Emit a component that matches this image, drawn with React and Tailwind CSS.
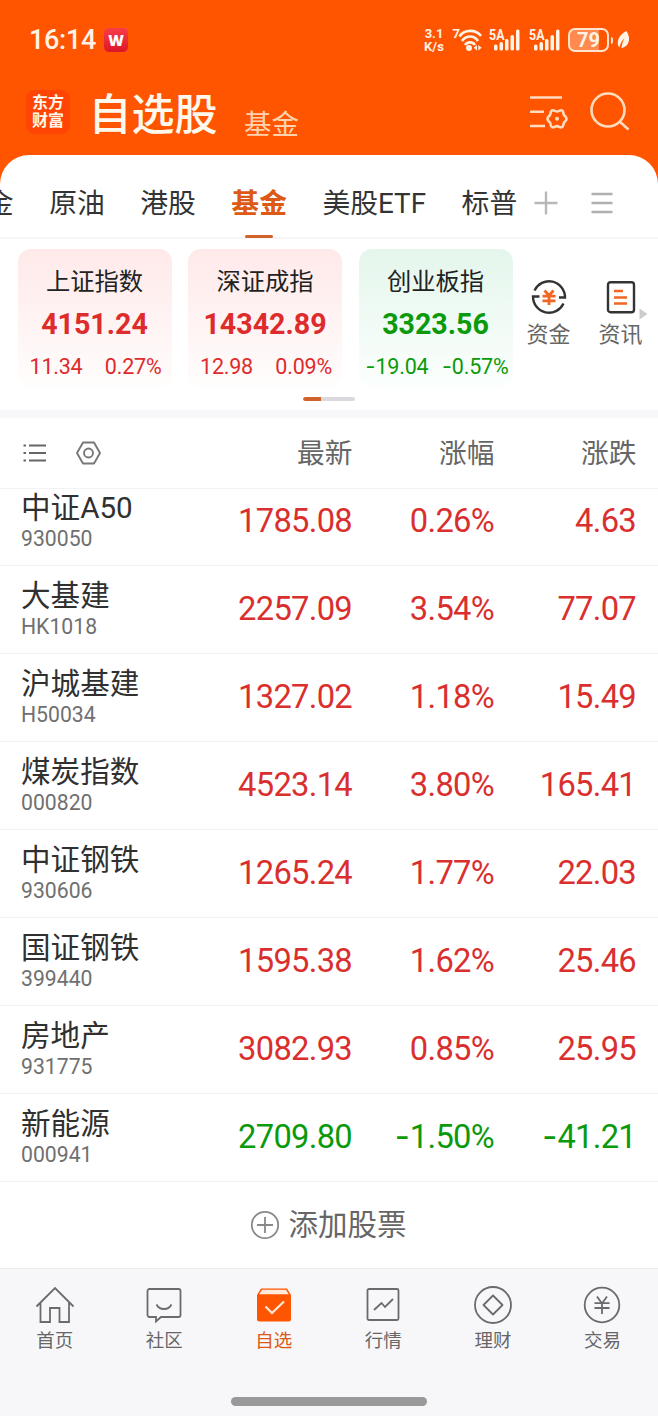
import clsx from "clsx";

const tabs = ["金", "原油", "港股", "基金", "美股ETF", "标普"];

const indices = [
  { name: "上证指数", value: "4151.24", change: "11.34", percent: "0.27%" },
  { name: "深证成指", value: "14342.89", change: "12.98", percent: "0.09%" },
  { name: "创业板指", value: "3323.56", change: "-19.04", percent: "-0.57%" },
];

const stocks = [
  { name: "中证A50", code: "930050", price: "1785.08", percent: "0.26%", change: "4.63" },
  { name: "大基建", code: "HK1018", price: "2257.09", percent: "3.54%", change: "77.07" },
  { name: "沪城基建", code: "H50034", price: "1327.02", percent: "1.18%", change: "15.49" },
  { name: "煤炭指数", code: "000820", price: "4523.14", percent: "3.80%", change: "165.41" },
  { name: "中证钢铁", code: "930606", price: "1265.24", percent: "1.77%", change: "22.03" },
  { name: "国证钢铁", code: "399440", price: "1595.38", percent: "1.62%", change: "25.46" },
  { name: "房地产", code: "931775", price: "3082.93", percent: "0.85%", change: "25.95" },
  { name: "新能源", code: "000941", price: "2709.80", percent: "-1.50%", change: "-41.21" },
];

// The minus sign is set in Inter, Roboto's hyphen is too short next to digits
function Num({ children }) {
  if (!children.startsWith("-")) return children;
  return (
    <>
      <span className="font-['Inter'] leading-[0] tracking-normal">-</span>
      {children.slice(1)}
    </>
  );
}

function Signal() {
  return (
    <svg width="33" height="24" viewBox="0 0 33 24" fill="#fff3e6">
      <text x="0" y="11.5" fontSize="14" fontWeight="700" fontFamily="Roboto, sans-serif" textLength="15.5" lengthAdjust="spacingAndGlyphs">
        5A
      </text>
      <rect x="5" y="16.5" width="3.5" height="6" rx="1.5" />
      <rect x="10.5" y="14" width="3.5" height="8.5" rx="1.5" />
      <rect x="16" y="11" width="3.5" height="11.5" rx="1.5" />
      <rect x="21.5" y="7" width="3.5" height="15.5" rx="1.5" />
      <rect x="27" y="1.5" width="3.5" height="21" rx="1.5" />
    </svg>
  );
}

function StatusBar() {
  return (
    <div className="flex h-20 items-center pl-[29px] pr-[28px] text-[#fff3e6]">
      <span className="text-[27px] leading-none font-medium tracking-[-0.3px]">16:14</span>
      <span className="ml-[8px] flex size-6 items-center justify-center rounded-[5px] bg-linear-to-b from-[#f83c48] to-[#dd1426] font-['Open_Sans'] text-[15px] leading-none font-extrabold text-white">
        W
      </span>
      <div className="ml-auto flex items-center">
        <div className="flex w-[24px] flex-col items-center text-[13px] leading-[13px] font-bold">
          <span>3.1</span>
          <span>K/s</span>
        </div>
        <svg className="ml-[6px]" width="31" height="26" viewBox="-1 0 31 26" fill="none" stroke="#fff3e6" strokeWidth="2.7">
          <text x="-0.5" y="11" fontSize="13" fontWeight="700" fontFamily="Roboto, sans-serif" fill="#fff3e6" stroke="none">
            7
          </text>
          <path d="M6.5 9.5C11 2 23 2 28 9" />
          <path d="M9 14c4-6 12-6 16 0" />
          <path d="M12 18c2.500-3.500 7.500-3.500 10 0" />
          <circle cx="16" cy="21" r="3" fill="#fff3e6" stroke="none" />
          <path d="M24 18v5.500l-3.300-2.800zM25.300 18v5.500l3.300-2.800z" fill="#fff3e6" stroke="none" />
        </svg>
        <div className="ml-[6px]">
          <Signal />
        </div>
        <div className="ml-[7px]">
          <Signal />
        </div>
        <div className="ml-[6px] flex h-[24px] w-[41px] items-center rounded-[7px] border-2 border-[#ffe4cf] bg-linear-to-r from-[#ff8a50] from-79% to-transparent to-79% pl-[7px] text-[20px] leading-none font-bold">
          79
        </div>
        <div className="ml-[2px] h-[7px] w-[2px] rounded-r bg-[#ffe4cf]" />
        <svg className="ml-[4px]" width="13" height="20" viewBox="0 0 13 20" fill="#fff3e6">
          <path d="M9.500 1C4 4 .5 8 .8 13.500c.1 1.800.7 3 1.600 4C3.300 13.500 5 10.500 7.600 8 6 11 5 14 4.300 18c6.500-.5 10.700-8 5.200-17z" />
        </svg>
      </div>
    </div>
  );
}

function TitleBar() {
  return (
    <div className="flex h-[75px] items-start pl-[26px] pr-[28px] text-[#fff8ec]">
      <div className="mt-[10px] flex size-[44px] flex-col items-center justify-center rounded-[9px] bg-[#ff4505] text-[16px] leading-[18px] font-bold">
        <span>东方</span>
        <span>财富</span>
      </div>
      <h1 className="ml-[18.5px] mt-[14px] text-[43px] leading-[42px] font-medium">自选股</h1>
      <span className="ml-[26.5px] mt-[31px] text-[27.5px] leading-[27px] text-[#ffd3ae]">基金</span>
      <svg className="ml-auto mt-[15px]" width="40" height="36" viewBox="0 0 40 36" fill="none" stroke="#ffdcc0" strokeWidth="2.6">
        <path d="M1 2.500h32M1 16.700h14M1 31h15" />
        <path
          d="M23 15.500c2-1 3 1 5 1s3-2 5-1 1 3.500 2.200 4.800 2.300 1.500 2.300 3.500-1.200 2.200-2.300 3.500-.2 3.800-2.200 4.800-3-1-5-1-3 2-5 1-1-3.500-2.200-4.800-2.300-1.500-2.300-3.500 1.200-2.200 2.300-3.500.2-3.800 2.200-4.800z"
          strokeLinejoin="round"
        />
        <circle cx="28" cy="23.800" r="2" fill="#ffdcc0" stroke="none" />
      </svg>
      <svg className="ml-[21px] mt-[12px]" width="40" height="40" viewBox="0 0 40 40" fill="none" stroke="#ffdcc0" strokeWidth="2.6">
        <circle cx="18" cy="18" r="16.500" />
        <path d="M29.500 29.500l9 8" />
      </svg>
    </div>
  );
}

function TabBar() {
  return (
    <div className="flex h-[84px] border-b-2 border-[#f5f5f7]">
      <div className="-ml-[14.2px] flex gap-[35.5px] text-[27.8px] leading-[98px] whitespace-nowrap text-[#333]">
        {tabs.map((tab) => (
          <div
            key={tab}
            className={clsx(
              "relative h-[83px]",
              tab === "基金" && "font-bold text-[#dd5a16]",
            )}
          >
            {tab}
            {tab === "基金" && (
              <span className="absolute bottom-0 left-1/2 h-[3px] w-7 -translate-x-1/2 rounded-full bg-[#d1622a]" />
            )}
          </div>
        ))}
      </div>
      <svg className="ml-[16.7px] mt-[36px]" width="24" height="24" viewBox="0 0 24 24" stroke="#b8b8b8" strokeWidth="2.4">
        <path d="M0.500 12h23M12 0.500v23" />
      </svg>
      <svg className="ml-[33px] mt-[36px]" width="22" height="24" viewBox="0 0 22 24" stroke="#b0b0b0" strokeWidth="2.4">
        <path d="M0.500 3h21M0.500 12h21M0.500 21h21" />
      </svg>
    </div>
  );
}

function IndexCard({ name, value, change, percent }) {
  const down = change.startsWith("-");
  return (
    <div
      className={clsx(
        "flex h-[139px] w-[154px] flex-col items-center rounded-[13px] bg-linear-to-b",
        down ? "from-[#e4f6ec] to-[#fcfffd] text-[#0b9a0b]" : "from-[#ffe9e9] to-[#fffdfd] text-[#de2b2b]",
      )}
    >
      <div className="mt-[21px] text-[24.3px] leading-[24px] text-[#222]">{name}</div>
      <div className="mt-[16px] text-[28.6px] leading-[28px] font-bold">{value}</div>
      <div
        className={clsx(
          "mt-[18px] flex w-full justify-between text-[21.5px] leading-[22px] tracking-[-0.2px]",
          down ? "pl-[7px] pr-[4px]" : "pl-[12px] pr-[10px]",
        )}
      >
        <span><Num>{change}</Num></span>
        <span><Num>{percent}</Num></span>
      </div>
    </div>
  );
}

function IndexPanel() {
  return (
    <div className="h-[171px]">
      <div className="flex pt-[10px] pl-[17.5px]">
        <div className="flex gap-[16.5px]">
          {indices.map((item) => (
            <IndexCard key={item.name} {...item} />
          ))}
        </div>
        <div className="ml-[14px] mt-[30px] flex flex-col items-center text-[22px] leading-[22px] text-[#666]">
          <svg width="36" height="36" viewBox="0 0 36 36" fill="none" stroke="#333" strokeWidth="2.4">
            <path d="M3.500 11.500A16 16 0 0 1 34 18.500h-6" />
            <path d="M32.500 24.500A16 16 0 0 1 2 17.500h6.500" />
            <path d="M13.500 11.500l4.500 5 4.500-5M11.500 17.200h13M11.500 21.800h13M18 16.500v9.500" stroke="#f26522" strokeWidth="2.8" />
          </svg>
          <span className="mt-[9px]">资金</span>
        </div>
        <div className="ml-[28px] mt-[30px] flex flex-col items-center text-[22px] leading-[22px] text-[#666]">
          <svg width="30" height="36" viewBox="0 0 30 36" fill="none" stroke="#333" strokeWidth="2.4">
            <rect x="2" y="3.200" width="26" height="30" rx="2.500" />
            <path d="M8 12h9M8 18.500h13M8 24.500h13" stroke="#f26522" strokeWidth="2.6" />
          </svg>
          <span className="mt-[9px]">资讯</span>
        </div>
        <svg className="-ml-[4px] mt-[59px]" width="9" height="12" viewBox="0 0 9 12" fill="#ccc">
          <path d="M0.500 0.500v11l8-5.500z" />
        </svg>
      </div>
      <div className="mx-auto mt-[9px] h-[4px] w-[52px] overflow-hidden rounded-full bg-[#d9d9de]">
        <div className="h-full w-[18px] rounded-l-full bg-[#d1622a]" />
      </div>
    </div>
  );
}

function ListHeader() {
  return (
    <div className="flex h-[71px] items-center border-b border-[#f2f2f2] pr-[21.5px] pl-[23px] text-[27.7px] leading-none text-[#666]">
      <svg width="24" height="20" viewBox="0 0 24 20" stroke="#666" strokeWidth="2.2">
        <path d="M0.500 2.500h2.500M6 2.500h17M0.500 10h2.500M6 10h17M0.500 17.500h2.500M6 17.500h17" />
      </svg>
      <svg className="ml-[29px]" width="26" height="24" viewBox="0 0 26 24" fill="none" stroke="#777" strokeWidth="1.9" strokeLinejoin="round">
        <path d="M7 1.500h11l6 10.500-6 10.500h-11l-6-10.500z" />
        <circle cx="12.500" cy="12" r="4.500" />
      </svg>
      <span className="ml-auto pt-[2px]">最新</span>
      <span className="w-[142px] pt-[2px] text-right">涨幅</span>
      <span className="w-[142px] pt-[2px] text-right">涨跌</span>
    </div>
  );
}

function StockRow({ name, code, price, percent, change }) {
  return (
    <div className="flex h-[88px] items-center border-b border-[#f2f2f2] pr-[22px] pb-[2px] pl-[21px]">
      <div className="flex-1">
        <div className="text-[29.6px] leading-[34px] text-[#303030]">{name}</div>
        <div className="mt-[3px] text-[21.2px] leading-[22px] text-[#707070]">{code}</div>
      </div>
      <div
        className={clsx(
          "flex pt-[2px] text-right text-[32.7px] leading-none tracking-[-0.7px]",
          change.startsWith("-") ? "text-[#0b9a0b]" : "text-[#d92f2f]",
        )}
      >
        <span>{price}</span>
        <span className="w-[142px]"><Num>{percent}</Num></span>
        <span className="w-[142px]"><Num>{change}</Num></span>
      </div>
    </div>
  );
}

const navItems = [
  {
    label: "首页",
    icon: (
      <path d="M1.500 20.500L20 2l18.500 18.500M5.500 17v19h9.500V22h9.500v14h9.500V17" />
    ),
  },
  {
    label: "社区",
    icon: (
      <>
        <path d="M5.500 3h29a2 2 0 0 1 2 2v24a2 2 0 0 1-2 2H17l-5 4.500V31H5.500a2 2 0 0 1-2-2V5a2 2 0 0 1 2-2z" />
        <path d="M12.500 18.500c3 6 12 6 15 0" />
      </>
    ),
  },
  {
    label: "自选",
    active: true,
    icon: (
      <>
        <path d="M7 2.500h26l4 6.500v24a2.500 2.500 0 0 1-2.500 2.500h-29A2.500 2.500 0 0 1 3 33V9z" fill="#ff5500" stroke="none" />
        <path d="M8 3.800h24l2.800 4.500H5.200z" fill="#ffe9da" stroke="none" />
        <path d="M11.500 20.500l6.500 6.500 12-11.500" stroke="#ffe9da" strokeWidth="2.2" />
      </>
    ),
  },
  {
    label: "行情",
    icon: (
      <>
        <rect x="4.500" y="3" width="31" height="31" rx="1.500" />
        <path d="M11 24l7.500-7 3.500 4 8-8" />
      </>
    ),
  },
  {
    label: "理财",
    icon: (
      <>
        <circle cx="20" cy="19" r="18" />
        <path d="M20 9.500l9.500 9.500-9.500 9.500-9.500-9.500z" strokeLinejoin="round" />
      </>
    ),
  },
  {
    label: "交易",
    icon: (
      <>
        <circle cx="20" cy="19" r="17.300" />
        <path d="M15 10.500l5 7 5-7M12.500 17.200h15M12.500 22h15M20 17.500v10.500" />
      </>
    ),
  },
];

function BottomNav() {
  return (
    <div className="flex h-[148px] flex-col border-t border-[#ececee] bg-[#f7f7fa]">
      <div className="flex pr-[0.8px]">
        {navItems.map(({ label, icon, active }) => (
          <div
            key={label}
            className={clsx(
              "flex flex-1 flex-col items-center pt-[17px] text-[18.5px] leading-[20px]",
              active ? "text-[#dd5a16]" : "text-[#666]",
            )}
          >
            <svg width="40" height="38" viewBox="0 0 40 38" fill="none" stroke="#6b6b6b" strokeWidth="1.8">
              {icon}
            </svg>
            <span className="mt-[7px]">{label}</span>
          </div>
        ))}
      </div>
      <div className="mx-auto mt-auto mb-[10px] h-[9px] w-[196px] rounded-full bg-[#999]" />
    </div>
  );
}

export default function App() {
  return (
    <div className="flex h-[1416px] w-[658px] flex-col overflow-hidden bg-[#ff5500] font-['Roboto','Noto_Sans_CJK_SC',sans-serif]">
      <StatusBar />
      <TitleBar />
      <div className="flex flex-1 flex-col overflow-hidden rounded-t-[29px] bg-white">
        <TabBar />
        <IndexPanel />
        <div className="h-[8px] bg-[#f7f7fa]" />
        <ListHeader />
        <div className="overflow-hidden">
          <div className="-mt-[11px]">
            {stocks.map((stock) => (
              <StockRow key={stock.code} {...stock} />
            ))}
          </div>
        </div>
        <div className="flex flex-1 items-center justify-center pr-[1px] text-[29.5px] leading-none text-[#666]">
          <svg className="mr-[8px]" width="30" height="30" viewBox="0 0 30 30" fill="none" stroke="#888" strokeWidth="1.8">
            <circle cx="15" cy="15" r="13.200" />
            <path d="M7 15h16M15 7v16" />
          </svg>
          <span className="pt-[2px]">添加股票</span>
        </div>
        <BottomNav />
      </div>
    </div>
  );
}
